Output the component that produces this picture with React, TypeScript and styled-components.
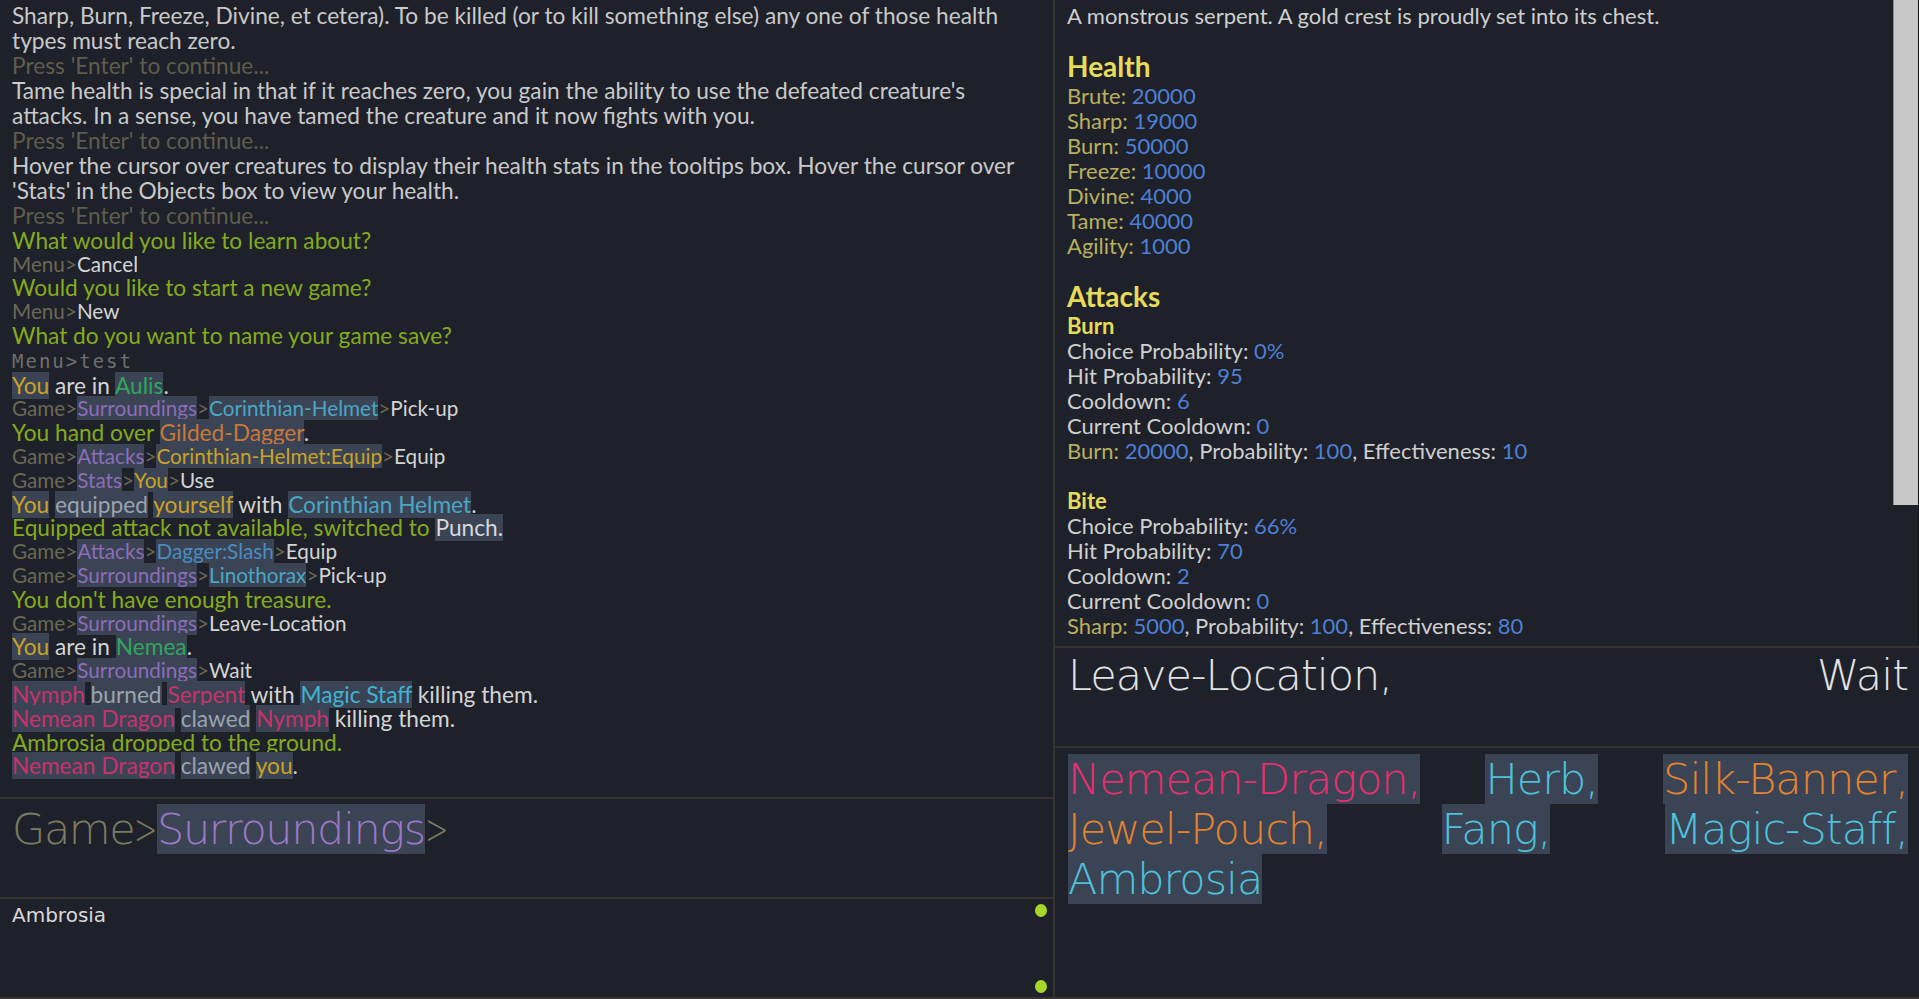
import React from 'react';
import styled, { createGlobalStyle } from 'styled-components';

const BODY_FONT = `Lato, "Open Sans", sans-serif`;
const BIG_FONT = `"DejaVu Sans", "Noto Sans", sans-serif`;
const MONO_FONT = `"DejaVu Sans Mono", "Liberation Mono", monospace`;

const C = {
  bg: '#1e2129',
  border: '#36332f',
  hl: '#3a4454',
  text: '#c9c9c9',
  dim: '#5e5c4c',
  prompt: '#6b6856',
  green: '#84ab1f',
  gold: '#c9a227',
  place: '#2fa65c',
  purple: '#8d6cb8',
  teal: '#4aa6c4',
  blue: '#4a8cc0',
  orange: '#c9773a',
  crimson: '#c8326c',
  cyan: '#3fb3d3',
  grey: '#9ba3ad',
  white: '#d6d8dc',
  cmd: '#d4d4d4',
  mono: '#6e6e6e',
  head: '#e6dc5a',
  khaki: '#b8b060',
  num: '#4d7fd4',
  label: '#cfcfcf',
};

const Global = createGlobalStyle`
  html, body { margin: 0; padding: 0; background: ${C.bg}; }
  body { overflow: hidden; }
  * { box-sizing: border-box; }
`;

const Screen = styled.div`
  display: grid;
  grid-template-columns: 1055px 864px;
  width: 1919px;
  height: 999px;
  background: ${C.bg};
  font-family: ${BODY_FONT};
  color: ${C.text};
`;

const Column = styled.div<{ $divider?: boolean }>`
  display: flex;
  flex-direction: column;
  min-height: 0;
  overflow: hidden;
  border-right: ${(p) => (p.$divider ? `2px solid ${C.border}` : 'none')};
`;

const Panel = styled.section<{ $h?: number }>`
  flex: ${(p) => (p.$h ? `0 0 ${p.$h}px` : '1 1 auto')};
  min-height: 0;
  overflow: hidden;
  border-bottom: 2px solid ${C.border};
`;

/* ---------- log ---------- */

type Kind = 'para' | 'line' | 'cmd' | 'mono';

const LINE_STYLE: Record<Kind, { lh: number; fs: number; ls: string; font: string }> = {
  para: { lh: 25, fs: 22.7, ls: 'normal', font: BODY_FONT },
  line: { lh: 23.8, fs: 22.7, ls: 'normal', font: BODY_FONT },
  cmd: { lh: 23.8, fs: 20.7, ls: 'normal', font: BODY_FONT },
  mono: { lh: 26, fs: 19, ls: '2px', font: MONO_FONT },
};

const Log = styled(Panel)`
  padding: 2.5px 12px 0 12px;
`;

const LogLine = styled.div<{ $kind: Kind }>`
  line-height: ${(p) => LINE_STYLE[p.$kind].lh}px;
  font-size: ${(p) => LINE_STYLE[p.$kind].fs}px;
  letter-spacing: ${(p) => LINE_STYLE[p.$kind].ls};
  font-family: ${(p) => LINE_STYLE[p.$kind].font};
  white-space: pre;
`;

const Seg = styled.span<{ $c: string; $hl?: boolean }>`
  color: ${(p) => p.$c};
  background: ${(p) => (p.$hl ? C.hl : 'transparent')};
`;

type S = { t: string; c: string; h?: boolean };
const s = (t: string, c: string = C.text, h = false): S => ({ t, c, h });
const hl = (t: string, c: string): S => ({ t, c, h: true });
const gt = s('>', C.prompt);
const game = s('Game>', C.prompt);
const menu = s('Menu>', C.prompt);

type L = { kind: Kind; segs: S[] };
const press: L = { kind: 'para', segs: [s("Press 'Enter' to continue...", C.dim)] };

const LOG: L[] = [
  { kind: 'para', segs: [s('Sharp, Burn, Freeze, Divine, et cetera). To be killed (or to kill something else) any one of those health')] },
  { kind: 'para', segs: [s('types must reach zero.')] },
  press,
  { kind: 'para', segs: [s("Tame health is special in that if it reaches zero, you gain the ability to use the defeated creature's")] },
  { kind: 'para', segs: [s('attacks. In a sense, you have tamed the creature and it now fights with you.')] },
  press,
  { kind: 'para', segs: [s('Hover the cursor over creatures to display their health stats in the tooltips box. Hover the cursor over')] },
  { kind: 'para', segs: [s("'Stats' in the Objects box to view your health.")] },
  press,
  { kind: 'para', segs: [s('What would you like to learn about?', C.green)] },
  { kind: 'cmd', segs: [menu, s('Cancel', C.cmd)] },
  { kind: 'line', segs: [s('Would you like to start a new game?', C.green)] },
  { kind: 'cmd', segs: [menu, s('New', C.cmd)] },
  { kind: 'line', segs: [s('What do you want to name your game save?', C.green)] },
  { kind: 'mono', segs: [s('Menu>test', C.mono)] },
  { kind: 'line', segs: [hl('You', C.gold), s(' are in ', C.cmd), hl('Aulis', C.place), s('.')] },
  { kind: 'cmd', segs: [game, hl('Surroundings', C.purple), gt, hl('Corinthian-Helmet', C.teal), gt, s('Pick-up', C.cmd)] },
  { kind: 'line', segs: [s('You hand over ', C.green), hl('Gilded-Dagger', C.orange), s('.')] },
  { kind: 'cmd', segs: [game, hl('Attacks', C.purple), gt, hl('Corinthian-Helmet:Equip', C.gold), gt, s('Equip', C.cmd)] },
  { kind: 'cmd', segs: [game, hl('Stats', C.purple), gt, hl('You', C.gold), gt, s('Use', C.cmd)] },
  { kind: 'line', segs: [hl('You', C.gold), s(' '), hl('equipped', C.grey), s(' '), hl('yourself', C.gold), s(' with ', C.cmd), hl('Corinthian Helmet', C.teal), s('.')] },
  { kind: 'line', segs: [s('Equipped attack not available, switched to ', C.green), hl('Punch.', C.white)] },
  { kind: 'cmd', segs: [game, hl('Attacks', C.purple), gt, hl('Dagger:Slash', C.blue), gt, s('Equip', C.cmd)] },
  { kind: 'cmd', segs: [game, hl('Surroundings', C.purple), gt, hl('Linothorax', C.teal), gt, s('Pick-up', C.cmd)] },
  { kind: 'line', segs: [s("You don't have enough treasure.", C.green)] },
  { kind: 'cmd', segs: [game, hl('Surroundings', C.purple), gt, s('Leave-Location', C.cmd)] },
  { kind: 'line', segs: [hl('You', C.gold), s(' are in ', C.cmd), hl('Nemea', C.place), s('.')] },
  { kind: 'cmd', segs: [game, hl('Surroundings', C.purple), gt, s('Wait', C.cmd)] },
  { kind: 'line', segs: [hl('Nymph', C.crimson), s(' '), hl('burned', C.grey), s(' '), hl('Serpent', C.crimson), s(' with ', C.cmd), hl('Magic Staff', C.cyan), s(' killing them.', C.cmd)] },
  { kind: 'line', segs: [hl('Nemean Dragon', C.crimson), s(' '), hl('clawed', C.grey), s(' '), hl('Nymph', C.crimson), s(' killing them.', C.cmd)] },
  { kind: 'line', segs: [s('Ambrosia dropped to the ground.', C.green)] },
  { kind: 'line', segs: [hl('Nemean Dragon', C.crimson), s(' '), hl('clawed', C.grey), s(' '), hl('you', C.gold), s('.')] },
];

/* ---------- input / objects ---------- */

const InputPanel = styled(Panel)`
  padding: 5px 12px 0 12px;
  font-family: ${BIG_FONT};
  font-weight: 200;
  font-size: 43px;
  line-height: 50px;
  letter-spacing: -1.4px;
  white-space: pre;
`;

const Chevron = styled.span`
  display: inline-block;
  color: #7d7a62;
  transform: scaleX(0.65);
  transform-origin: left center;
  margin-right: -12px;
`;

const ObjectsPanel = styled(Panel)`
  display: flex;
  justify-content: space-between;
  padding: 4px 6px 4px 12px;
`;

const ObjectName = styled.div`
  font-family: ${BIG_FONT};
  font-size: 20px;
  line-height: 24px;
  color: #d8d8d8;
`;

const DotColumn = styled.div`
  display: flex;
  flex-direction: column;
  justify-content: space-between;
  padding-top: 1px;
`;

const Dot = styled.span`
  display: block;
  width: 12px;
  height: 13px;
  border-radius: 50%;
  background: #a6d62a;
`;

/* ---------- tooltip ---------- */

const TooltipPanel = styled(Panel)`
  display: flex;
`;

const TooltipBody = styled.div`
  flex: 1 1 auto;
  padding: 2.5px 0 0 12px;
  font-size: 22px;
  line-height: 25px;
  white-space: pre;
`;

const ScrollTrack = styled.div`
  flex: 0 0 26px;
  display: flex;
  flex-direction: column;
  border-right: 1px solid #15171c;
`;

const ScrollThumb = styled.div`
  height: 505px;
  background: #c8c8c8;
  border-left: 1px solid #8d8d8d;
`;

const Desc = styled.div`
  color: ${C.label};
`;

const Heading = styled.div`
  margin-top: 22px;
  font-size: 28px;
  line-height: 33px;
  font-weight: 700;
  color: ${C.head};
`;

const SubHeading = styled.div<{ $gap?: boolean }>`
  margin-top: ${(p) => (p.$gap ? '25px' : '0')};
  font-weight: 700;
  color: ${C.head};
`;

const Row = styled.div``;

const Lbl = styled.span<{ $c?: string }>`
  color: ${(p) => p.$c ?? C.label};
`;

const Num = styled.span`
  color: ${C.num};
`;

const HEALTH: [string, string][] = [
  ['Brute', '20000'],
  ['Sharp', '19000'],
  ['Burn', '50000'],
  ['Freeze', '10000'],
  ['Divine', '4000'],
  ['Tame', '40000'],
  ['Agility', '1000'],
];

type Attack = {
  name: string;
  rows: [string, string][];
  dmg: [string, string, string, string];
};

const ATTACKS: Attack[] = [
  {
    name: 'Burn',
    rows: [
      ['Choice Probability', '0%'],
      ['Hit Probability', '95'],
      ['Cooldown', '6'],
      ['Current Cooldown', '0'],
    ],
    dmg: ['Burn', '20000', '100', '10'],
  },
  {
    name: 'Bite',
    rows: [
      ['Choice Probability', '66%'],
      ['Hit Probability', '70'],
      ['Cooldown', '2'],
      ['Current Cooldown', '0'],
    ],
    dmg: ['Sharp', '5000', '100', '80'],
  },
];

/* ---------- actions / items ---------- */

const JustifiedPanel = styled(Panel)<{ $pt: number }>`
  padding: ${(p) => p.$pt}px 11px 0 13px;
  font-family: ${BIG_FONT};
  font-weight: 200;
  font-size: 43px;
  line-height: 50px;
  letter-spacing: -1px;
  text-align: justify;
`;

const ActionsText = styled.div`
  text-align: justify;
  text-align-last: justify;
  color: #e2e2e2;
`;

const ItemsText = styled.div`
  text-align: justify;
  word-spacing: 8px;
`;

const Item = styled.span<{ $c: string }>`
  color: ${(p) => p.$c};
  background: ${C.hl};
  word-spacing: normal;
`;

const ITEMS: [string, string][] = [
  ['Nemean-Dragon,', '#e5306e'],
  ['Herb,', '#4fc1da'],
  ['Silk-Banner,', '#e3832f'],
  ['Jewel-Pouch,', '#e3832f'],
  ['Fang,', '#4fc1da'],
  ['Magic-Staff,', '#4fc1da'],
  ['Ambrosia', '#4fc1da'],
];

export default function App() {
  return (
    <>
      <Global />
      <Screen>
        <Column $divider>
          <Log $h={799}>
            {LOG.map((line, i) => (
              <LogLine key={i} $kind={line.kind}>
                {line.segs.map((sg, j) => (
                  <Seg key={j} $c={sg.c} $hl={sg.h}>
                    {sg.t}
                  </Seg>
                ))}
              </LogLine>
            ))}
          </Log>
          <InputPanel $h={100}>
            <Seg $c="#7d7a62">Game</Seg>
            <Chevron>&gt;</Chevron>
            <Seg $c="#9c78c4" $hl>
              Surroundings
            </Seg>
            <Chevron>&gt;</Chevron>
          </InputPanel>
          <ObjectsPanel>
            <ObjectName>Ambrosia</ObjectName>
            <DotColumn>
              <Dot />
              <Dot />
            </DotColumn>
          </ObjectsPanel>
        </Column>
        <Column>
          <TooltipPanel $h={648}>
            <TooltipBody>
              <Desc>A monstrous serpent. A gold crest is proudly set into its chest.</Desc>
              <Heading>Health</Heading>
              {HEALTH.map(([k, v]) => (
                <Row key={k}>
                  <Lbl $c={C.khaki}>{k}: </Lbl>
                  <Num>{v}</Num>
                </Row>
              ))}
              <Heading>Attacks</Heading>
              {ATTACKS.map((a, i) => (
                <React.Fragment key={a.name}>
                  <SubHeading $gap={i > 0}>{a.name}</SubHeading>
                  {a.rows.map(([k, v]) => (
                    <Row key={k}>
                      <Lbl>{k}: </Lbl>
                      <Num>{v}</Num>
                    </Row>
                  ))}
                  <Row>
                    <Lbl $c={C.khaki}>{a.dmg[0]}: </Lbl>
                    <Num>{a.dmg[1]}</Num>
                    <Lbl>, Probability: </Lbl>
                    <Num>{a.dmg[2]}</Num>
                    <Lbl>, Effectiveness: </Lbl>
                    <Num>{a.dmg[3]}</Num>
                  </Row>
                </React.Fragment>
              ))}
            </TooltipBody>
            <ScrollTrack>
              <ScrollThumb />
            </ScrollTrack>
          </TooltipPanel>
          <JustifiedPanel $h={100} $pt={2}>
            <ActionsText>Leave-Location, Wait</ActionsText>
          </JustifiedPanel>
          <JustifiedPanel $pt={6}>
            <ItemsText>
              {ITEMS.map(([name, c], i) => (
                <React.Fragment key={name}>
                  <Item $c={c}>{name}</Item>
                  {i < ITEMS.length - 1 ? ' ' : ''}
                </React.Fragment>
              ))}
            </ItemsText>
          </JustifiedPanel>
        </Column>
      </Screen>
    </>
  );
}
